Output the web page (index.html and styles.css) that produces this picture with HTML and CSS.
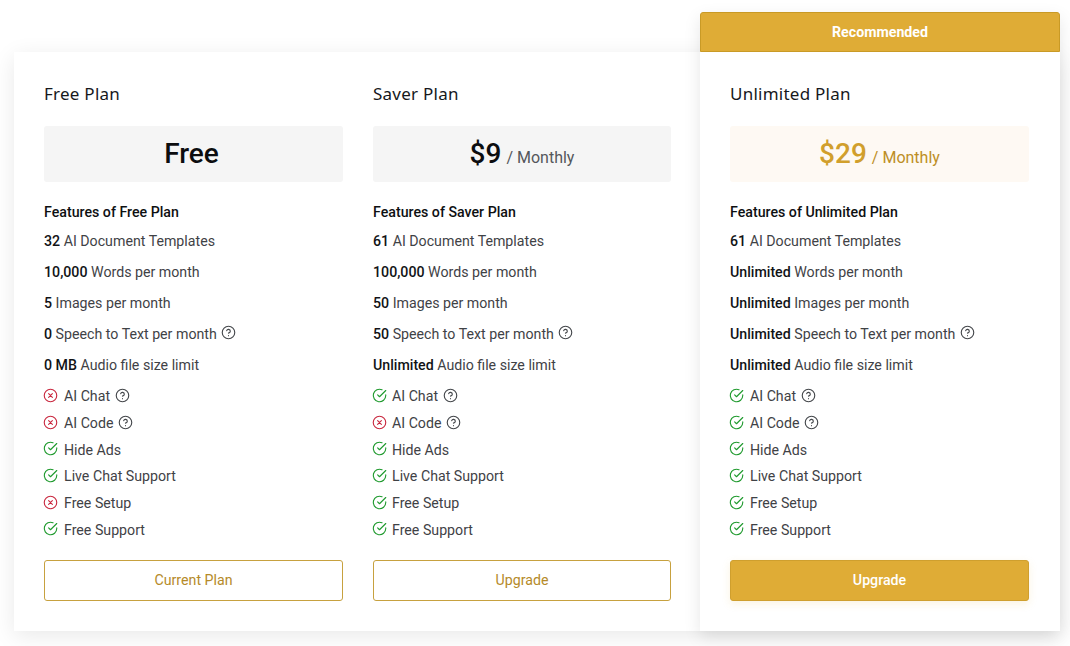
FILE: index.html
```html
<!DOCTYPE html>
<html lang="en">
<head>
<meta charset="utf-8">
<title>Pricing</title>
<link rel="stylesheet" href="styles.css">
</head>
<body>
<svg class="defs" width="0" height="0" aria-hidden="true">
  <symbol id="yes" viewBox="0 0 24 24"><path d="M22 11.08V12a10 10 0 1 1-5.93-9.14"/><path d="M22 4 12 14.01l-3-3"/></symbol>
  <symbol id="no" viewBox="0 0 24 24"><circle cx="12" cy="12" r="10"/><path d="m15 9-6 6M9 9l6 6"/></symbol>
  <symbol id="help" viewBox="0 0 24 24"><circle cx="12" cy="12" r="10"/><path d="M9.09 9a3 3 0 0 1 5.83 1c0 2-3 3-3 3"/><path d="M12 17h.01"/></symbol>
</svg>
<main class="pricing">
  <section class="plan">
    <h2 class="plan-name">Free Plan</h2>
    <div class="price price-free"><span class="amount">Free</span></div>
    <h3 class="features-title">Features of Free Plan</h3>
    <ul class="limits">
      <li><b>32</b> AI Document Templates</li>
      <li><b>10,000</b> Words per month</li>
      <li><b>5</b> Images per month</li>
      <li><b>0</b> Speech to Text per month <svg class="help"><use href="#help"/></svg></li>
      <li><b>0 MB</b> Audio file size limit</li>
    </ul>
    <ul class="perks">
      <li><svg class="mark no"><use href="#no"/></svg>AI Chat <svg class="help"><use href="#help"/></svg></li>
      <li><svg class="mark no"><use href="#no"/></svg>AI Code <svg class="help"><use href="#help"/></svg></li>
      <li><svg class="mark yes"><use href="#yes"/></svg>Hide Ads</li>
      <li><svg class="mark yes"><use href="#yes"/></svg>Live Chat Support</li>
      <li><svg class="mark no"><use href="#no"/></svg>Free Setup</li>
      <li><svg class="mark yes"><use href="#yes"/></svg>Free Support</li>
    </ul>
    <a class="btn">Current Plan</a>
  </section>
  <section class="plan plan-mid">
    <h2 class="plan-name">Saver Plan</h2>
    <div class="price"><span class="amount">$9</span><span class="period">/ Monthly</span></div>
    <h3 class="features-title">Features of Saver Plan</h3>
    <ul class="limits">
      <li><b>61</b> AI Document Templates</li>
      <li><b>100,000</b> Words per month</li>
      <li><b>50</b> Images per month</li>
      <li><b>50</b> Speech to Text per month <svg class="help"><use href="#help"/></svg></li>
      <li><b>Unlimited</b> Audio file size limit</li>
    </ul>
    <ul class="perks">
      <li><svg class="mark yes"><use href="#yes"/></svg>AI Chat <svg class="help"><use href="#help"/></svg></li>
      <li><svg class="mark no"><use href="#no"/></svg>AI Code <svg class="help"><use href="#help"/></svg></li>
      <li><svg class="mark yes"><use href="#yes"/></svg>Hide Ads</li>
      <li><svg class="mark yes"><use href="#yes"/></svg>Live Chat Support</li>
      <li><svg class="mark yes"><use href="#yes"/></svg>Free Setup</li>
      <li><svg class="mark yes"><use href="#yes"/></svg>Free Support</li>
    </ul>
    <a class="btn">Upgrade</a>
  </section>
  <section class="plan-featured">
    <div class="ribbon">Recommended</div>
    <div class="plan plan-inner">
      <h2 class="plan-name">Unlimited Plan</h2>
      <div class="price price-gold"><span class="amount">$29</span><span class="period">/ Monthly</span></div>
      <h3 class="features-title">Features of Unlimited Plan</h3>
      <ul class="limits">
        <li><b>61</b> AI Document Templates</li>
        <li><b>Unlimited</b> Words per month</li>
        <li><b>Unlimited</b> Images per month</li>
        <li><b>Unlimited</b> Speech to Text per month <svg class="help"><use href="#help"/></svg></li>
        <li><b>Unlimited</b> Audio file size limit</li>
      </ul>
      <ul class="perks">
        <li><svg class="mark yes"><use href="#yes"/></svg>AI Chat <svg class="help"><use href="#help"/></svg></li>
        <li><svg class="mark yes"><use href="#yes"/></svg>AI Code <svg class="help"><use href="#help"/></svg></li>
        <li><svg class="mark yes"><use href="#yes"/></svg>Hide Ads</li>
        <li><svg class="mark yes"><use href="#yes"/></svg>Live Chat Support</li>
        <li><svg class="mark yes"><use href="#yes"/></svg>Free Setup</li>
        <li><svg class="mark yes"><use href="#yes"/></svg>Free Support</li>
      </ul>
      <a class="btn btn-solid">Upgrade</a>
    </div>
  </section>
</main>
</body>
</html>
```
FILE: styles.css
```css
* { box-sizing: border-box; }
html, body { margin: 0; height: 100%; overflow: hidden; background: #fff; }
body { font-family: Roboto, "Liberation Sans", sans-serif; color: #3f4246; }
.defs { position: absolute; }

.pricing {
  display: flex;
  width: 1046px;
  height: 579px;
  margin: 52px 0 0 14px;
  background: #fff;
  box-shadow: 0 5px 22px rgba(0, 0, 0, .09);
}

.plan { width: 329px; padding: 30px 0 0 30px; flex: none; }
.plan-mid { width: 357px; padding-right: 29px; padding-left: 30px; }
.plan-mid .mark { margin-right: 5px; }
.plan-featured {
  width: 360px;
  flex: none;
  margin-top: -40px;
  height: 619px;
  display: flex;
  flex-direction: column;
  background: #fff;
  box-shadow: 0 6px 16px rgba(0, 0, 0, .1);
}
.plan-inner { width: auto; padding-right: 31px; }

.ribbon {
  height: 40px;
  line-height: 39px;
  text-align: center;
  font-size: 14.2px;
  font-weight: 700;
  color: #fff;
  background: #dfac36;
  border: 1px solid #c99a26;
  border-radius: 3px 3px 0 0;
}

.plan-name {
  margin: 0;
  height: 24px;
  line-height: 24px;
  font-family: "Noto Sans", sans-serif;
  font-size: 17px;
  font-weight: 400;
  letter-spacing: .25px;
  color: #16181b;
}

.price {
  width: 299px;
  height: 56px;
  margin-top: 20px;
  display: flex;
  justify-content: center;
  align-items: center;
  gap: 5px;
  background: #f5f5f5;
  border-radius: 3px;
}
.price-free { padding-right: 4px; }
.plan-mid .price, .plan-mid .btn { width: 298px; }
.amount { font-size: 28px; font-weight: 500; color: #0c0d0f; margin-top: -2px; }
.period { font-size: 16px; color: #54575b; padding-top: 6px; }
.price-gold { background: #fef9f3; }
.price-gold .amount { color: #d19f2c; }
.price-gold .period { color: #bd8e25; }

.features-title {
  margin: 20px 0 0;
  height: 20px;
  line-height: 20px;
  font-size: 14.2px;
  font-weight: 500;
  color: #0e1012;
}

ul { list-style: none; margin: 0; padding: 0; font-size: 14.2px; }
.limits { margin-top: 3px; }
.limits li { height: 31px; display: flex; align-items: center; white-space: pre; }
.limits b { font-weight: 500; color: #111316; }
.perks { margin-top: 3px; }
.perks li { height: 26.7px; display: flex; align-items: center; white-space: pre; }

svg { fill: none; stroke: currentColor; stroke-width: 1.8; stroke-linecap: round; stroke-linejoin: round; }
.mark { width: 15px; height: 15px; margin: 0 6px 0 -1px; flex: none; position: relative; top: -1px; }
.yes { color: #1f9a2e; }
.no { color: #c9283f; }
.help { width: 15px; height: 15px; margin-left: 1px; color: #44474b; position: relative; top: -1px; }

.btn {
  display: block;
  width: 299px;
  height: 41px;
  margin-top: 17px;
  line-height: 39px;
  text-align: center;
  font-size: 14.2px;
  color: #b58a29;
  background: #fff;
  border: 1px solid #c7a13f;
  border-radius: 3px;
}
.btn-solid {
  color: #fff;
  font-weight: 500;
  background: #dfac36;
  border-color: #cf9f2e;
  box-shadow: 0 3px 8px rgba(223, 172, 54, .15);
}
```
